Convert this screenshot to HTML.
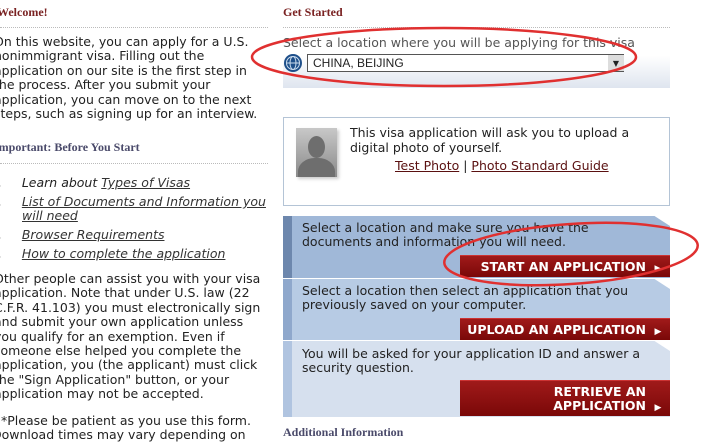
<!DOCTYPE html>
<html><head><style>
body{margin:0;width:705px;height:435px;overflow:hidden;background:#fff;position:relative;font-family:"DejaVu Sans",Verdana,sans-serif;font-size:12px;color:#222}
.a{position:absolute;white-space:nowrap}
.h{font-family:"Liberation Serif",serif;font-weight:bold;font-size:12px}
.dot{position:absolute;height:0;border-top:1px dotted #bbb}
a{color:#222;text-decoration:underline}
.l{font-style:italic;font-size:12.5px}
.l a{color:#333}
.t{font-size:12.5px}
.panel{position:absolute;left:283px;width:387px}
.btn{position:absolute;left:460px;width:210px;background:linear-gradient(#a01a1a,#7a0808);color:#fff;font-weight:bold;font-size:12.5px;text-align:right;border-top:1px solid #c33;white-space:nowrap;overflow:hidden}
.btn span{display:inline-block;width:24px;text-align:center;font-size:9px}
</style></head><body>
<div class="a h" style="left:-3px;top:5px;color:#7a2222">Welcome!</div>
<div class="dot" style="left:0;top:27px;width:268px"></div>
<div class="a t" style="left:-6px;top:35px;line-height:14.4px">On this website, you can apply for a U.S.<br>nonimmigrant visa. Filling out the<br>application on our site is the first step in<br>the process. After you submit your<br>application, you can move on to the next<br>steps, such as signing up for an interview.</div>
<div class="a h" style="left:-6px;top:140px;color:#4a4a6a">Important: Before You Start</div>
<div class="dot" style="left:0;top:163px;width:268px"></div>
<div class="a l" style="left:-2px;top:176px;line-height:14px">.&nbsp;&nbsp;&nbsp;&nbsp; Learn about <a>Types of Visas</a></div>
<div class="a l" style="left:-2px;top:195px;line-height:14px">.&nbsp;&nbsp;&nbsp;&nbsp; <a>List of Documents and Information you</a></div>
<div class="a l" style="left:22px;top:209px;line-height:14px"><a>will need</a></div>
<div class="a l" style="left:-2px;top:228px;line-height:14px">.&nbsp;&nbsp;&nbsp;&nbsp; <a>Browser Requirements</a></div>
<div class="a l" style="left:-2px;top:247px;line-height:14px">.&nbsp;&nbsp;&nbsp;&nbsp; <a>How to complete the application</a></div>
<div class="a t" style="left:-6px;top:272px;line-height:14.4px">Other people can assist you with your visa<br>application. Note that under U.S. law (22<br>C.F.R. 41.103) you must electronically sign<br>and submit your own application unless<br>you qualify for an exemption. Even if<br>someone else helped you complete the<br>application, you (the applicant) must click<br>the "Sign Application" button, or your<br>application may not be accepted.</div>
<div class="a t" style="left:1px;top:414px;line-height:14.4px">*Please be patient as you use this form.</div>
<div class="a t" style="left:-8px;top:428px;line-height:14.4px">Download times may vary depending on</div>

<div class="a h" style="left:283px;top:5px;color:#7a2222">Get Started</div>
<div class="dot" style="left:283px;top:27px;width:387px"></div>
<div style="position:absolute;left:283px;top:34px;width:387px;height:54px;background:linear-gradient(#fff 40%,#dfe5ef)"></div>
<div class="a" style="left:283px;top:35px;color:#555;font-size:12.5px">Select a location where you will be applying for this visa</div>
<svg class="a" style="left:283px;top:53px" width="20" height="20" viewBox="0 0 20 20"><circle cx="10" cy="10" r="9" fill="#1e4f8a"/><circle cx="10" cy="10" r="6.5" fill="none" stroke="#cde" stroke-width="1"/><ellipse cx="10" cy="10" rx="3" ry="6.5" fill="none" stroke="#cde"/><line x1="3.5" y1="10" x2="16.5" y2="10" stroke="#cde"/></svg>
<div class="a" style="left:307px;top:54px;width:317px;height:18px;border:1px solid #555;background:#fff;font-family:'Liberation Sans',sans-serif;font-size:12px;line-height:16px;padding-left:5px;box-sizing:border-box">CHINA, BEIJING</div>
<div class="a" style="left:608px;top:55px;width:16px;height:16px;background:#ddd;font-size:8px;text-align:center;line-height:18px">▼</div>

<div style="position:absolute;left:283px;top:117px;width:385px;height:87px;border:1px solid #b4c4d6"></div>
<div style="position:absolute;left:296px;top:128px;width:41px;height:49px;background:linear-gradient(#c8c8c8,#8a8a8a);box-shadow:2px 2px 3px #ccc;overflow:hidden"><div style="position:absolute;left:12px;top:8px;width:17px;height:22px;border-radius:50%;background:#6e6e6e"></div><div style="position:absolute;left:2px;top:30px;width:37px;height:30px;border-radius:45% 45% 0 0;background:#6e6e6e"></div></div>
<div class="a" style="left:350px;top:125px;line-height:15px;font-size:12.5px">This visa application will ask you to upload a<br>digital photo of yourself.</div>
<div class="a" style="left:395px;top:158px;font-size:12.5px"><a style="color:#5a1010">Test Photo</a> | <a style="color:#5a1010">Photo Standard Guide</a></div>

<div class="panel" style="top:216px;height:62px;background:#a0b8d8;clip-path:polygon(0 0,96% 0,100% 10px,100% 100%,0 100%)"></div>
<div class="panel" style="top:279px;height:61px;background:#b7cbe4;clip-path:polygon(0 0,96% 0,100% 10px,100% 100%,0 100%)"></div>
<div class="panel" style="top:341px;height:76px;background:#d6e0ee;clip-path:polygon(0 0,96% 0,100% 10px,100% 100%,0 100%)"></div>
<div style="position:absolute;left:283px;top:216px;width:9px;height:62px;background:#6d87ad"></div>
<div style="position:absolute;left:283px;top:279px;width:9px;height:61px;background:#8fa8cc"></div>
<div style="position:absolute;left:283px;top:341px;width:9px;height:76px;background:#b0c4e0"></div>
<div class="a" style="left:302px;top:221px;line-height:14px;font-size:12.5px">Select a location and make sure you have the<br>documents and information you will need.</div>
<div class="btn" style="top:255px;height:21px;line-height:21px">START AN APPLICATION<span>▶</span></div>
<div class="a" style="left:302px;top:284px;line-height:14px;font-size:12.5px">Select a location then select an application that you<br>previously saved on your computer.</div>
<div class="btn" style="top:318px;height:21px;line-height:21px">UPLOAD AN APPLICATION<span>▶</span></div>
<div class="a" style="left:302px;top:347px;line-height:14px;font-size:12.5px">You will be asked for your application ID and answer a<br>security question.</div>
<div class="btn" style="top:380px;height:36px;line-height:14px;padding-top:4px;box-sizing:border-box">RETRIEVE AN<span></span><br>APPLICATION<span>▶</span></div>
<div class="a h" style="left:283px;top:425px;color:#4a4a6a">Additional Information</div>

<svg class="a" style="left:0;top:0" width="705" height="435"><ellipse cx="444" cy="57" rx="192" ry="29" fill="none" stroke="#e03030" stroke-width="2.5"/><ellipse cx="571" cy="254" rx="127" ry="30" fill="none" stroke="#e03030" stroke-width="2.5" transform="rotate(-4 571 254)"/></svg>
</body></html>
